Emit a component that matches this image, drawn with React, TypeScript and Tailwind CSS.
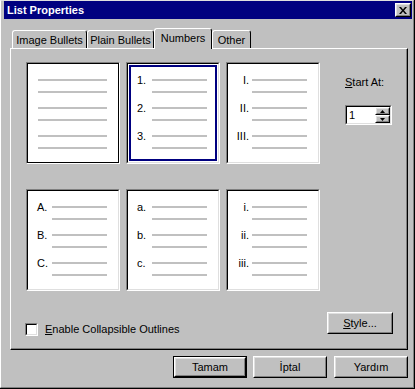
import React from "react";

type BoxDef = {
  labels: string[] | null;
  align?: "left" | "right";
  selected?: boolean;
  focus?: boolean;
};

const boxes: BoxDef[] = [
  { labels: null, focus: true },
  { labels: ["1.", "2.", "3."], align: "left", selected: true },
  { labels: ["I.", "II.", "III."], align: "right" },
  { labels: ["A.", "B.", "C."], align: "left" },
  { labels: ["a.", "b.", "c."], align: "left" },
  { labels: ["i.", "ii.", "iii."], align: "right" },
];

function Line({ w }: { w: string }) {
  return <div className={`h-[2px] bg-[#c0c0c0] ${w}`} />;
}

function BoxContent({ box }: { box: BoxDef }) {
  if (!box.labels) {
    return (
      <div className="flex flex-col gap-[4px] pt-[10px] pl-[10px]">
        {[0, 1, 2].map((i) => (
          <div key={i} className="flex flex-col">
            <div className="h-[12px] flex items-center">
              <Line w="w-[69px]" />
            </div>
            <div className="h-[12px] flex items-center">
              <Line w="w-[69px]" />
            </div>
          </div>
        ))}
      </div>
    );
  }
  return (
    <div className={`flex flex-col gap-[4px] ${box.selected ? "pt-[7px] pl-[5px]" : "pt-[10px] pl-[8px]"}`}>
      {box.labels.map((l) => (
        <div key={l} className="flex flex-col">
          <div className="h-[12px] flex items-center">
            <span
              className={`w-[16px] text-[11px] leading-none text-black ${
                box.align === "right" ? "text-right pr-[3px]" : "pl-[1px]"
              }`}
            >
              {l}
            </span>
            <Line w="w-[55px]" />
          </div>
          <div className="h-[12px] flex items-center pl-[16px]">
            <Line w="w-[55px]" />
          </div>
        </div>
      ))}
    </div>
  );
}

function Box({ box }: { box: BoxDef }) {
  return (
    <div className="w-[94px] h-[102px] border border-t-[#808080] border-l-[#808080] border-r-white border-b-white">
      <div
        className={`h-full bg-white border ${
          box.focus
            ? "border-black"
            : "border-t-black border-l-black border-r-[#dfdfdf] border-b-[#dfdfdf]"
        } ${box.selected ? "p-[1px]" : ""}`}
      >
        {box.selected ? (
          <div className="h-full border-2 border-[#000080]">
            <BoxContent box={box} />
          </div>
        ) : (
          <BoxContent box={box} />
        )}
      </div>
    </div>
  );
}

function Bevel({ children, className = "" }: { children: React.ReactNode; className?: string }) {
  return (
    <div className={`border border-t-white border-l-white border-r-black border-b-black bg-[#c0c0c0] ${className}`}>
      <div className="h-full border border-t-[#dfdfdf] border-l-[#dfdfdf] border-r-[#808080] border-b-[#808080] flex items-center justify-center">
        {children}
      </div>
    </div>
  );
}

function Button({ label, isDefault }: { label: React.ReactNode; isDefault?: boolean }) {
  if (isDefault) {
    return (
      <div className="w-[74px] h-[22px] border border-black">
        <Bevel className="h-full">
          <span className="text-[11px] text-black">{label}</span>
        </Bevel>
      </div>
    );
  }
  return (
    <Bevel className="w-[74px] h-[22px]">
      <span className="text-[11px] text-black">{label}</span>
    </Bevel>
  );
}

function Tab({ label, w, selected }: { label: string; w: string; selected?: boolean }) {
  if (selected) {
    return (
      <div
        className={`${w} h-[21px] -mb-px relative z-10 bg-[#c0c0c0] border-t border-l border-white border-r border-r-black rounded-t-[3px] flex justify-center pt-[2px]`}
      >
        <span className="text-[11px] text-black leading-[14px]">{label}</span>
      </div>
    );
  }
  return (
    <div
      className={`${w} h-[18px] bg-[#c0c0c0] border-t border-l border-white border-r border-r-black rounded-t-[3px] flex justify-center pt-[2px]`}
    >
      <span className="text-[11px] text-black leading-[14px]">{label}</span>
    </div>
  );
}

export default function App() {
  return (
    <div
      className="w-[415px] h-[389px] bg-[#c0c0c0] border-r border-b border-black"
      style={{ fontFamily: '"Liberation Sans", Arial, sans-serif' }}
    >
      <div className="h-full border-l border-t border-l-white border-t-[#dfdfdf] border-r border-b border-r-[#808080] border-b-[#808080] pl-[3px] pr-[1px] flex flex-col">
        {/* Title bar */}
        <div className="h-[18px] bg-[#000080] flex items-center justify-between pl-[3px] pr-[1px]">
          <span className="text-white font-bold text-[11px]">List Properties</span>
          <Bevel className="w-[16px] h-[14px]">
            <svg width="8" height="7" viewBox="0 0 8 7">
              <path d="M0 0h2l2 2.5L6 0h2L5 3.5 8 7H6L4 4.5 2 7H0l3-3.5z" fill="#000" />
            </svg>
          </Bevel>
        </div>

        {/* Tabs */}
        <div className="mt-[9px] ml-[8px] h-[20px] flex items-end">
          <Tab label="Image Bullets" w="w-[75px]" />
          <Tab label="Plain Bullets" w="w-[67px]" />
          <Tab label="Numbers" w="w-[58px]" selected />
          <Tab label="Other" w="w-[39px]" />
        </div>

        {/* Panel */}
        <div className="ml-[6px] w-[398px] h-[302px] border-l border-t border-white border-r border-b border-r-black border-b-black">
          <div className="h-full border-r border-b border-[#808080] pl-[15px] pt-[13px] pr-[13px] flex flex-col">
            <div className="flex items-start">
              <div className="grid grid-cols-3 gap-x-[6px] gap-y-[25px]">
                {boxes.map((b, i) => (
                  <Box key={i} box={b} />
                ))}
              </div>
              <div className="ml-[25px] mt-[14px] flex flex-col">
                <span className="text-[11px] text-black leading-[13px]">
                  <span className="underline">S</span>tart At:
                </span>
                <div className="mt-[16px] w-[47px] h-[20px] border border-t-[#808080] border-l-[#808080] border-r-white border-b-white">
                  <div className="h-full bg-white border border-t-black border-l-black border-r-[#dfdfdf] border-b-[#dfdfdf] flex items-center">
                    <span className="flex-1 pl-[2px] text-[11px] text-black leading-none">1</span>
                    <div className="flex flex-col w-[15px] h-full">
                      <Bevel className="flex-1">
                        <svg width="5" height="3" viewBox="0 0 5 3">
                          <path d="M2.5 0L5 3H0z" fill="#000" />
                        </svg>
                      </Bevel>
                      <Bevel className="flex-1">
                        <svg width="5" height="3" viewBox="0 0 5 3">
                          <path d="M0 0h5L2.5 3z" fill="#000" />
                        </svg>
                      </Bevel>
                    </div>
                  </div>
                </div>
              </div>
            </div>

            <div className="mt-[21px] flex items-start justify-between">
              <div className="mt-[9px] -ml-px flex items-center gap-[7px]">
                <div className="w-[13px] h-[13px] border border-t-[#808080] border-l-[#808080] border-r-white border-b-white">
                  <div className="h-full bg-white border border-t-black border-l-black border-r-[#dfdfdf] border-b-[#dfdfdf]" />
                </div>
                <span className="text-[11px] text-black">
                  <span className="underline">E</span>nable Collapsible Outlines
                </span>
              </div>
              <Bevel className="w-[66px] h-[22px]">
                <span className="text-[11px] text-black">
                  <span className="underline">S</span>tyle...
                </span>
              </Bevel>
            </div>
          </div>
        </div>

        {/* Dialog buttons */}
        <div className="mt-[6px] flex justify-end pr-[4px]">
          <Button label="Tamam" isDefault />
          <div className="ml-[6px]">
            <Button label="İptal" />
          </div>
          <div className="ml-[7px]">
            <Button label="Yardım" />
          </div>
        </div>
      </div>
    </div>
  );
}
